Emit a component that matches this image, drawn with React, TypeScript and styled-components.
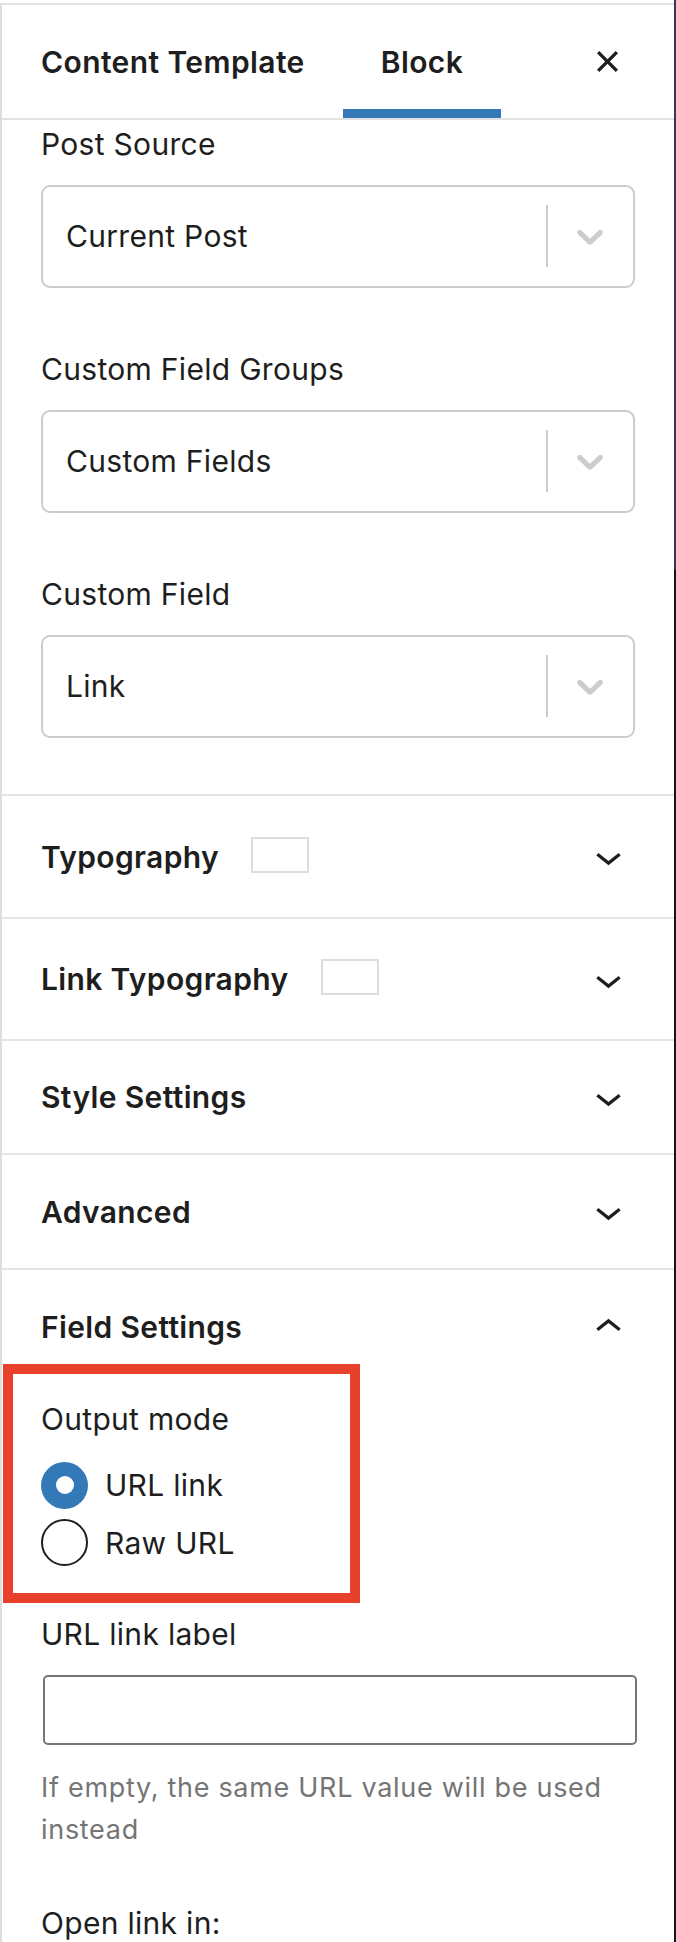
import React from "react";
import styled, { createGlobalStyle } from "styled-components";

const GlobalStyle = createGlobalStyle`
  html, body { margin: 0; padding: 0; background: #ffffff; }
  body {
    font-family: Inter, "Noto Sans", "Liberation Sans", sans-serif;
    color: #1e1e1e;
    -webkit-font-smoothing: antialiased;
  }
  * { box-sizing: border-box; }
`;

const Page = styled.div`
  display: flex;
  width: 676px;
  height: 1942px;
  overflow: hidden;
`;

const Sidebar = styled.aside`
  width: 674px;
  margin-top: 3px;
  border-top: 2px solid #e2e2e2;
  border-left: 2px solid #dedede;
  background: #ffffff;
`;

const Edge = styled.div`
  width: 2px;
  flex: none;
  background: linear-gradient(#3b3552 0 570px, #151515 570px);
`;

const Header = styled.header`
  display: flex;
  align-items: stretch;
  height: 115px;
  padding: 0 40px 0 1px;
  border-bottom: 2px solid #e2e2e2;
`;

const Tab = styled.button<{ $active?: boolean }>`
  position: relative;
  border: 0;
  background: none;
  padding: 0 38px;
  font-family: inherit;
  font-size: 30px;
  font-weight: 600;
  letter-spacing: 0.4px;
  line-height: 40px;
  color: #1e1e1e;
  cursor: pointer;
  &::after {
    content: "";
    position: absolute;
    left: 0;
    right: 0;
    bottom: 0;
    height: 9px;
    background: ${(p) => (p.$active ? "#3479b7" : "transparent")};
  }
`;

const CloseButton = styled.button`
  margin-left: auto;
  align-self: center;
  display: flex;
  border: 0;
  padding: 0;
  background: none;
  color: #1e1e1e;
`;

const PanelBody = styled.section`
  padding: 3.5px 39px 56.5px;
  border-bottom: 2px solid #e4e4e4;
`;

const Field = styled.div<{ $space?: number }>`
  margin-bottom: ${(p) => p.$space ?? 0}px;
`;

const Label = styled.div<{ $gap?: number }>`
  font-size: 30px;
  letter-spacing: 0.3px;
  line-height: 40px;
  margin-bottom: ${(p) => p.$gap ?? 21}px;
`;

const SelectBox = styled.div`
  display: flex;
  align-items: center;
  height: 103px;
  border: 2px solid #cccccc;
  border-radius: 9px;
  background: #ffffff;
`;

const SelectValue = styled.div`
  flex: 1;
  padding-left: 23px;
  font-size: 30px;
  letter-spacing: 0.3px;
  line-height: 40px;
  color: #1e1e1e;
`;

const SelectSeparator = styled.span`
  width: 2px;
  height: 62px;
  background: #cccccc;
`;

const SelectIndicator = styled.span`
  display: flex;
  padding: 0 21px 0 20px;
  color: #cccccc;
`;

const AccordionSection = styled.section`
  border-bottom: 2px solid #e4e4e4;
`;

const AccordionTitle = styled.div<{ $height: number }>`
  display: flex;
  align-items: center;
  height: ${(p) => p.$height}px;
  padding: 0 39px 0 39px;
  font-size: 30px;
  font-weight: 600;
  letter-spacing: 0.35px;
  line-height: 40px;
  color: #1e1e1e;
`;

const Swatch = styled.span`
  width: 58px;
  height: 36px;
  margin: 0 0 4px 32px;
  border: 2px solid #dddddd;
  background: #ffffff;
`;

const ToggleIcon = styled.span`
  margin-left: auto;
  display: flex;
  color: #1e1e1e;
`;

const FieldSettingsBody = styled.div`
  padding: 14.5px 39px 0;
`;

const RadioGroup = styled.div`
  position: relative;
`;

const Highlight = styled.div`
  position: absolute;
  top: -34.5px;
  left: -37.6px;
  width: 357px;
  bottom: -37px;
  border: 10px solid #e8412b;
  pointer-events: none;
`;

const RadioList = styled.div`
  display: flex;
  flex-direction: column;
  gap: 10.5px;
`;

const RadioRow = styled.label`
  display: flex;
  align-items: center;
  gap: 17px;
  height: 47px;
  font-size: 30px;
  letter-spacing: 0.3px;
  line-height: 40px;
`;

const RadioDot = styled.span<{ $checked?: boolean }>`
  flex: none;
  width: 47px;
  height: 47px;
  border-radius: 50%;
  display: flex;
  align-items: center;
  justify-content: center;
  background: ${(p) => (p.$checked ? "#3479b7" : "#ffffff")};
  border: ${(p) => (p.$checked ? "0" : "2px solid #1e1e1e")};
  &::after {
    content: "";
    display: ${(p) => (p.$checked ? "block" : "none")};
    width: 18px;
    height: 18px;
    border-radius: 50%;
    background: #ffffff;
  }
`;

const TextInput = styled.input`
  display: block;
  width: 594px;
  height: 70px;
  margin: 0 0 0 2px;
  border: 2px solid #767676;
  border-radius: 5px;
  background: #ffffff;
  font-family: inherit;
  font-size: 30px;
`;

const Help = styled.p`
  margin: 22.4px 0 0;
  font-size: 27px;
  letter-spacing: 0.7px;
  line-height: 42px;
  color: #757575;
`;

const ChevronDown = () => (
  <svg width="53" height="53" viewBox="0 0 24 24" fill="currentColor" aria-hidden>
    <path d="M17.5 11.6L12 16l-5.5-4.4.9-1.2L12 14l4.6-3.6.9 1.2z" />
  </svg>
);

const ChevronUp = () => (
  <svg width="53" height="53" viewBox="0 0 24 24" fill="currentColor" aria-hidden>
    <path d="M6.5 12.4L12 8l5.5 4.4-.9 1.2L12 10l-4.6 3.6-.9-1.2z" />
  </svg>
);

const CloseIcon = () => (
  <svg width="53" height="53" viewBox="0 0 24 24" fill="currentColor" aria-hidden>
    <path d="M12 13.06l3.712 3.713 1.061-1.06L13.061 12l3.712-3.712-1.06-1.06L12 10.938 8.288 7.227l-1.061 1.06L10.939 12l-3.712 3.712 1.06 1.061L12 13.061z" />
  </svg>
);

const SelectChevron = () => (
  <svg width="44" height="44" viewBox="0 0 20 20" fill="currentColor" aria-hidden>
    <path d="M4.516 7.548c0.436-0.446 1.043-0.481 1.576 0l3.908 3.747 3.908-3.747c0.533-0.481 1.141-0.446 1.574 0 0.436 0.445 0.408 1.197 0 1.615-0.406 0.418-4.695 4.502-4.695 4.502-0.217 0.223-0.502 0.335-0.787 0.335s-0.57-0.112-0.789-0.335c0 0-4.287-4.084-4.695-4.502s-0.436-1.17 0-1.615z" />
  </svg>
);

const Select = ({ value }: { value: string }) => (
  <SelectBox>
    <SelectValue>{value}</SelectValue>
    <SelectSeparator />
    <SelectIndicator>
      <SelectChevron />
    </SelectIndicator>
  </SelectBox>
);

const sections: { title: string; height: number; swatch?: boolean }[] = [
  { title: "Typography", height: 121, swatch: true },
  { title: "Link Typography", height: 120, swatch: true },
  { title: "Style Settings", height: 112 },
  { title: "Advanced", height: 113 },
];

export default function App() {
  return (
    <>
      <GlobalStyle />
      <Page>
        <Sidebar>
          <Header>
            <Tab>Content Template</Tab>
            <Tab $active>Block</Tab>
            <CloseButton aria-label="Close">
              <CloseIcon />
            </CloseButton>
          </Header>

          <PanelBody>
            <Field $space={61}>
              <Label>Post Source</Label>
              <Select value="Current Post" />
            </Field>
            <Field $space={61}>
              <Label>Custom Field Groups</Label>
              <Select value="Custom Fields" />
            </Field>
            <Field>
              <Label>Custom Field</Label>
              <Select value="Link" />
            </Field>
          </PanelBody>

          {sections.map((s) => (
            <AccordionSection key={s.title}>
              <AccordionTitle $height={s.height}>
                {s.title}
                {s.swatch && <Swatch />}
                <ToggleIcon>
                  <ChevronDown />
                </ToggleIcon>
              </AccordionTitle>
            </AccordionSection>
          ))}

          <section>
            <AccordionTitle $height={114}>
              Field Settings
              <ToggleIcon>
                <ChevronUp />
              </ToggleIcon>
            </AccordionTitle>
            <FieldSettingsBody>
              <RadioGroup>
                <Label $gap={23}>Output mode</Label>
                <RadioList>
                  <RadioRow>
                    <RadioDot $checked />
                    URL link
                  </RadioRow>
                  <RadioRow>
                    <RadioDot />
                    Raw URL
                  </RadioRow>
                </RadioList>
                <Highlight />
              </RadioGroup>

              <Field style={{ marginTop: 47.5 }}>
                <Label $gap={21.5}>URL link label</Label>
                <TextInput type="text" />
                <Help>If empty, the same URL value will be used instead</Help>
              </Field>

              <Field style={{ marginTop: 52 }}>
                <Label>Open link in:</Label>
              </Field>
            </FieldSettingsBody>
          </section>
        </Sidebar>
        <Edge />
      </Page>
    </>
  );
}
